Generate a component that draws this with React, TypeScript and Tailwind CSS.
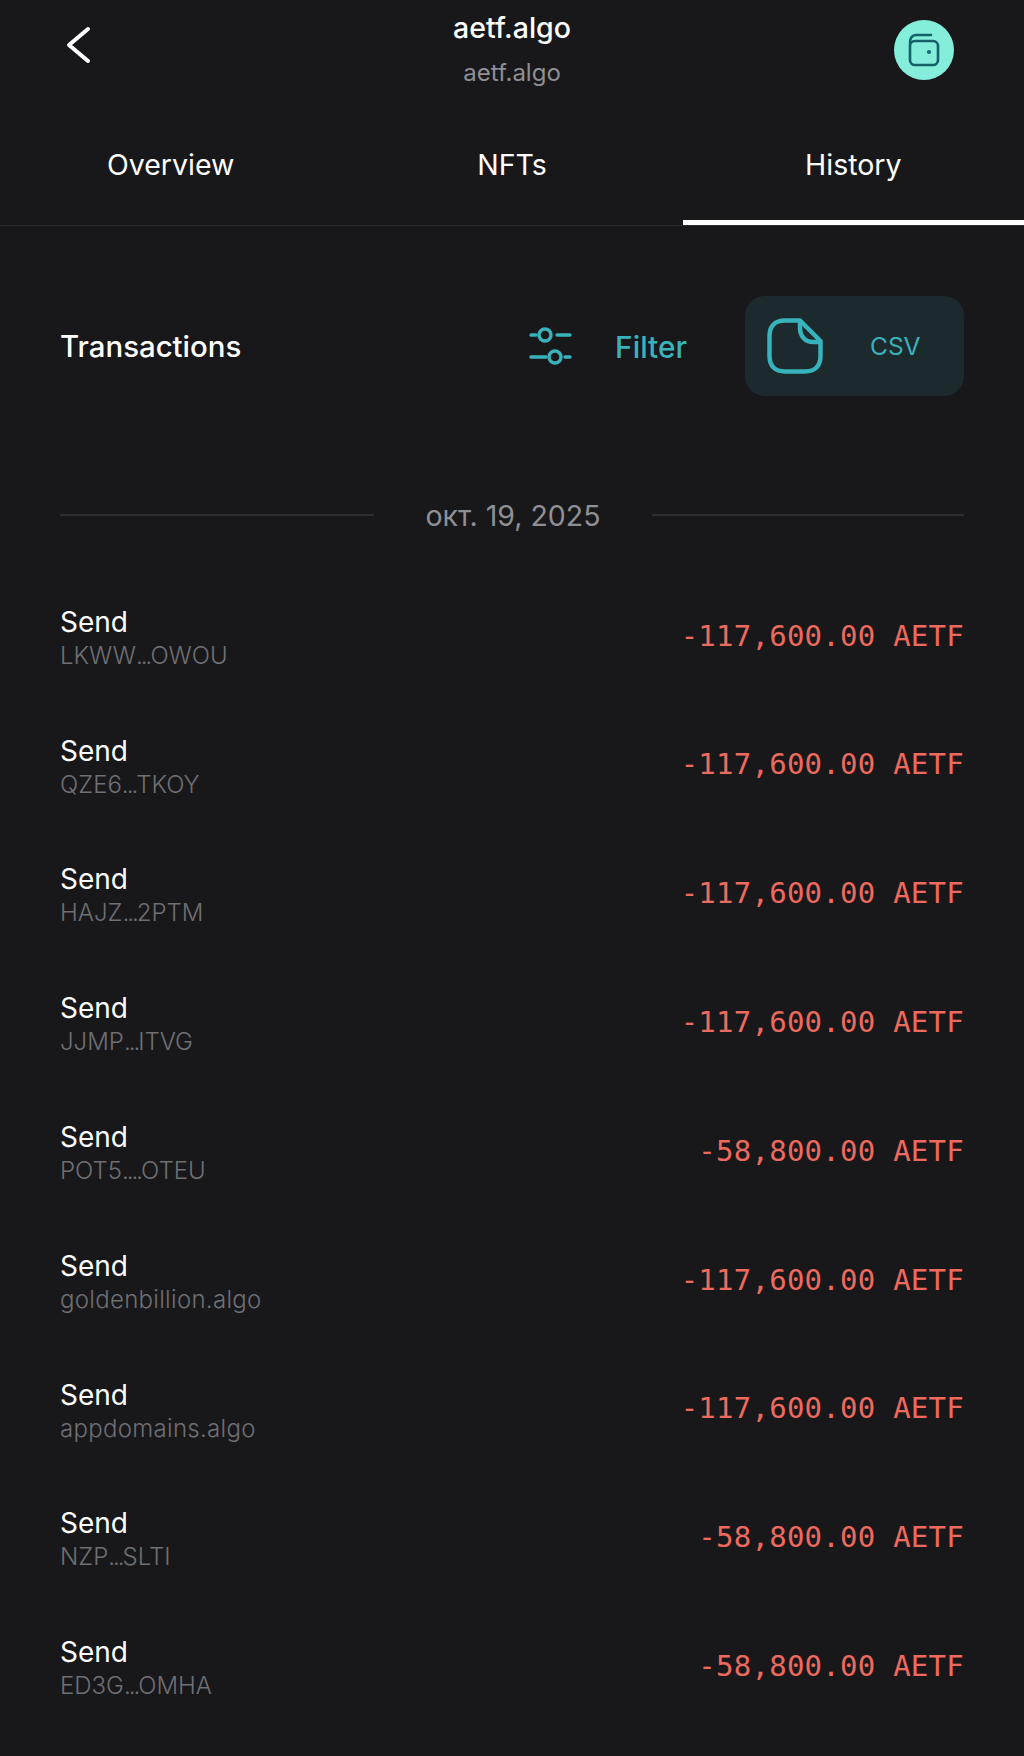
import React from "react";

const txs = [
  { to: "LKWW...OWOU", amount: "-117,600.00 AETF" },
  { to: "QZE6...TKOY", amount: "-117,600.00 AETF" },
  { to: "HAJZ...2PTM", amount: "-117,600.00 AETF" },
  { to: "JJMP...ITVG", amount: "-117,600.00 AETF" },
  { to: "POT5....OTEU", amount: "-58,800.00 AETF" },
  { to: "goldenbillion.algo", amount: "-117,600.00 AETF" },
  { to: "appdomains.algo", amount: "-117,600.00 AETF" },
  { to: "NZP...SLTI", amount: "-58,800.00 AETF" },
  { to: "ED3G...OMHA", amount: "-58,800.00 AETF" },
];

function WalletIcon() {
  return (
    <svg width="34" height="34" viewBox="0 0 34 34" fill="none" stroke="#14616a" strokeWidth="2.6" strokeLinecap="round" strokeLinejoin="round">
      <path d="M3 10C3 5 5 2 9 2H24" />
      <rect x="3" y="8" width="28" height="24" rx="5" />
      <circle cx="22" cy="19" r="0.8" fill="#14616a" />
    </svg>
  );
}

function SlidersIcon() {
  return (
    <svg width="44" height="38" viewBox="0 0 44 38" fill="none" stroke="#38b2bb" strokeWidth="3.4" strokeLinecap="round">
      <path d="M2 8H7M28 8H41M2 30H17M36 30H41" />
      <circle cx="16" cy="8" r="6" />
      <circle cx="26" cy="30" r="6" />
    </svg>
  );
}

function StickerIcon() {
  return (
    <svg width="56" height="56" viewBox="0 0 56 56" fill="none" stroke="#38b2bb" strokeWidth="4.5" strokeLinejoin="round">
      <path d="M33 2.5H18C8 2.5 2.5 8 2.5 18V38C2.5 48 8 53.5 18 53.5H38C48 53.5 53.5 48 53.5 38V23Z" />
      <path d="M33 2.5V10C33 18 38 24 46 24H53.5" />
    </svg>
  );
}

// the dots in shortened addresses sit closer together than the font's own
function Address({ value }: { value: string }) {
  if (value.endsWith(".algo")) return <span className="tracking-[0.3px]">{value}</span>;
  return (
    <span>
      {value.split(/(\.+)/).map((part, i) =>
        part.startsWith(".") ? (
          <span key={i} className="tracking-[-2px]">{part}</span>
        ) : (
          <span key={i}>{part}</span>
        )
      )}
    </span>
  );
}

export default function App() {
  return (
    <div className="w-[1024px] h-[1756px] overflow-hidden bg-[#18181a] text-white" style={{ fontFamily: "Inter, sans-serif" }}>
      <header className="grid grid-cols-[1fr_auto_1fr] items-start px-[64px] h-[104px]">
        <svg className="mt-[26px]" width="28" height="38" viewBox="0 0 28 38" fill="none" stroke="#fff" strokeWidth="4" strokeLinecap="round" strokeLinejoin="round">
          <path d="M24 3L5 19L24 35" />
        </svg>
        <div className="flex flex-col items-center pt-[11px]">
          <span className="text-[28.5px] leading-[34px] font-medium">aetf.algo</span>
          <span className="text-[24px] leading-[32px] mt-[12px] text-[#8f8f94]">aetf.algo</span>
        </div>
        <div className="mt-[20px] mr-[6px] justify-self-end w-[60px] h-[60px] rounded-full bg-[#84eedb] flex items-center justify-center">
          <WalletIcon />
        </div>
      </header>

      <nav className="grid grid-cols-3 h-[122px] border-b border-[#2a2a2d]">
        {["Overview", "NFTs", "History"].map((t, i) => (
          <div key={t} className={`flex items-center justify-center text-[28.5px] pt-[6px] border-b-[5px] ${i === 2 ? "border-white" : "border-transparent"}`}>
            {t}
          </div>
        ))}
      </nav>

      <section className="flex items-center justify-between px-[60px] mt-[70px] h-[100px]">
        <span className="text-[29.4px] font-medium pt-[2px]">Transactions</span>
        <div className="flex items-center">
          <SlidersIcon />
          <span className="ml-[42px] mr-[58px] pt-[2px] text-[29.8px] font-medium text-[#38b2bb]">Filter</span>
          <div className="w-[219px] h-[100px] rounded-[20px] bg-[#1c2a2e] flex items-center pl-[22px] text-[#38b2bb]">
            <StickerIcon />
            <span className="ml-[47px] text-[24.5px]">CSV</span>
          </div>
        </div>
      </section>

      <div className="flex items-center justify-between px-[60px] mt-[100px] h-[40px]">
        <div className="w-[314px] h-[2px] mb-[3px] bg-[#2d2d30]" />
        <span className="text-[28.5px] text-[#8f8f94]">окт. 19, 2025</span>
        <div className="w-[312px] h-[2px] mb-[3px] bg-[#2d2d30]" />
      </div>

      <ul className="mt-[36px] px-[60px] flex flex-col">
        {txs.map((tx, i) => (
          <li key={i} className="h-[128.8px] flex items-center justify-between">
            <div className="flex flex-col pt-[3px]">
              <span className="text-[28px] leading-[36px]">Send</span>
              <span className="text-[24px] leading-[32px] text-[#6f6f74] font-light">
                <Address value={tx.to} />
              </span>
            </div>
            <span className="text-[29px] text-[#ef6a5e] tracking-[0.25px]" style={{ fontFamily: "'DejaVu Sans Mono', monospace" }}>{tx.amount}</span>
          </li>
        ))}
      </ul>
    </div>
  );
}
